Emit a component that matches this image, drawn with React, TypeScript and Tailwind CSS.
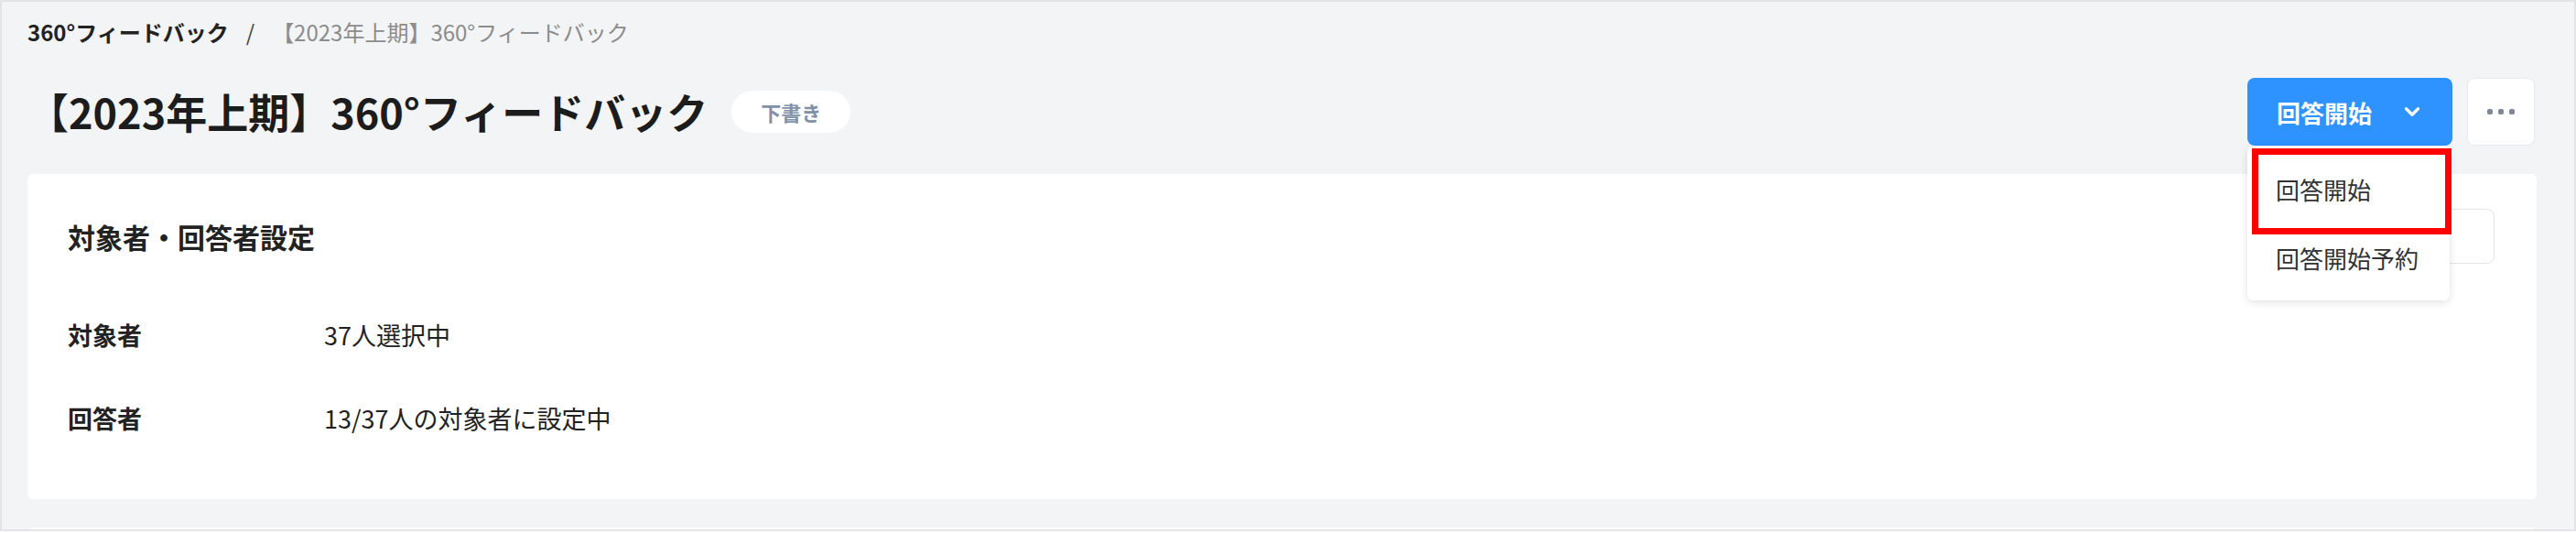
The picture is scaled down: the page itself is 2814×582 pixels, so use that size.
import { ChevronDown } from "lucide-react";

const font = "font-['Noto_Sans_CJK_JP','Noto_Sans',sans-serif]";

function StartMenu() {
  return (
    <div className="relative">
      <button
        className="flex h-[74px] w-[224px] items-center rounded-[8px] bg-[#2e93ff] pl-[32px] text-[26px] font-bold text-white"
        type="button"
      >
        <span>回答開始</span>
        <ChevronDown className="ml-[31px] h-[26px] w-[26px]" strokeWidth={3} />
      </button>
      <div className="absolute left-0 top-[75px] z-10 w-[221px] rounded-[6px] bg-white py-[9px] shadow-[0_2px_10px_rgba(0,0,0,0.12)]">
        <div className="flex h-[75px] items-center pl-[31px] text-[26px] text-[#333]">
          回答開始
        </div>
        <div className="flex h-[75px] items-center pl-[31px] text-[26px] text-[#333]">
          回答開始予約
        </div>
        {/* annotation frame */}
        <div className="pointer-events-none absolute left-[5px] top-[2px] h-[94px] w-[218px] border-[7px] border-[#ff0000]" />
      </div>
    </div>
  );
}

function InfoRow({ label, value }: { label: string; value: string }) {
  return (
    <div className="flex h-[40px] items-center text-[27px] text-[#222]">
      <div className="w-[280px] font-bold">{label}</div>
      <div>{value}</div>
    </div>
  );
}

export default function App() {
  return (
    <div className={`${font} h-[582px] w-[2814px] bg-white`}>
      <div className="h-[580px] overflow-hidden border-2 border-[#e3e4e6] bg-[#f3f4f6] pl-[28px] pr-[41px]">
        <div className="mt-[17px] flex h-[32px] items-center text-[24px]">
          <span className="font-bold text-[#222]">360°フィードバック</span>
          <span className="mx-[19px] text-[#444]">/</span>
          <span className="text-[#8c8c8c]">【2023年上期】360°フィードバック</span>
        </div>

        <div className="mt-[34px] flex h-[74px] items-center justify-between">
          <div className="flex items-center">
            <h1 className="text-[45px] font-bold leading-[60px] text-[#1c1c1c]">
              【2023年上期】360°フィードバック
            </h1>
            <span className="ml-[26px] flex h-[46px] items-center rounded-full bg-white px-[32px] text-[22px] font-bold text-[#8091a8]">
              下書き
            </span>
          </div>
          <div className="flex items-center gap-[16px] pr-[2px]">
            <StartMenu />
            <button
              className="flex h-[74px] w-[74px] items-center justify-center gap-[6px] rounded-[8px] border border-[#e6e8ec] bg-white"
              type="button"
            >
              <span className="h-[6px] w-[6px] rounded-[2px] bg-[#7c8797]" />
              <span className="h-[6px] w-[6px] rounded-[2px] bg-[#7c8797]" />
              <span className="h-[6px] w-[6px] rounded-[2px] bg-[#7c8797]" />
            </button>
          </div>
        </div>

        <div className="mt-[31px] h-[355px] rounded-[6px] bg-white pl-[44px] pr-[46px] pt-[38px]">
          <div className="flex h-[60px] items-center justify-between">
            <h2 className="text-[30px] font-bold text-[#222]">対象者・回答者設定</h2>
            <button
              className="h-[60px] w-[170px] rounded-[8px] border border-[#e3e5e9] bg-white"
              type="button"
              aria-label="編集"
            />
          </div>
          <div className="mt-[58px] flex flex-col gap-[51px]">
            <InfoRow label="対象者" value="37人選択中" />
            <InfoRow label="回答者" value="13/37人の対象者に設定中" />
          </div>
        </div>

        <div className="mt-[31px] h-[40px] rounded-[6px] bg-white" />
      </div>
    </div>
  );
}
